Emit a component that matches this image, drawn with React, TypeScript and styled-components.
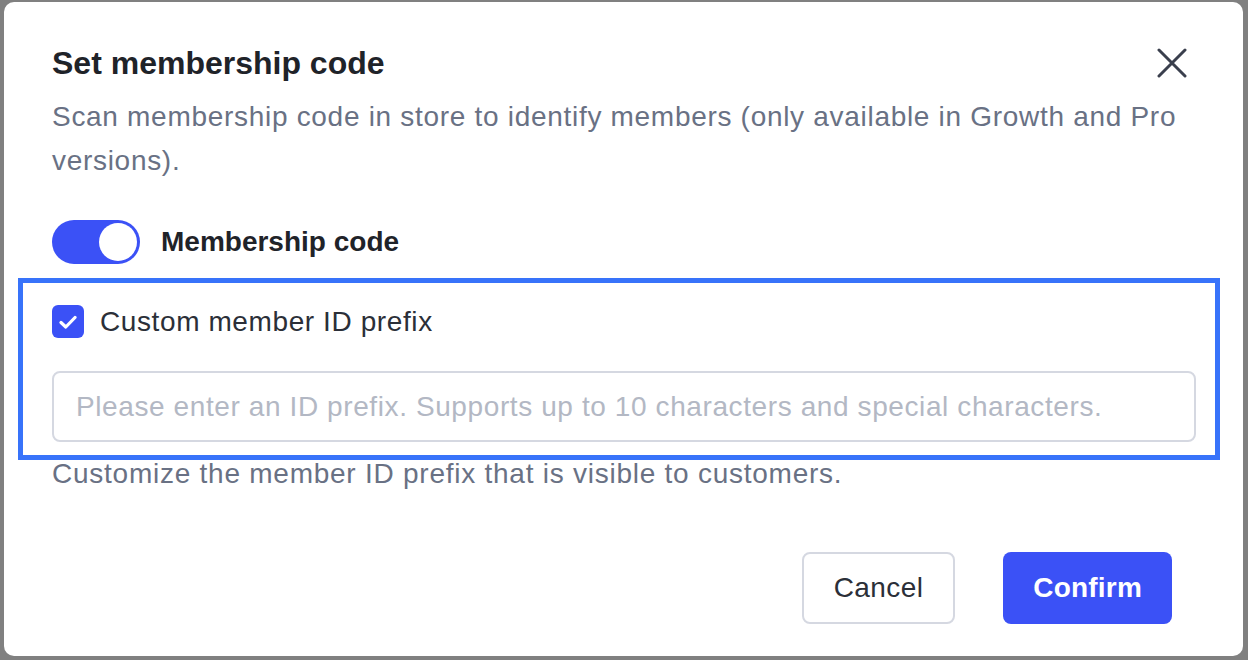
import React, { useState } from "react";
import styled, { createGlobalStyle } from "styled-components";

const Global = createGlobalStyle`
  html, body { margin: 0; padding: 0; background: #808080; }
  body { font-family: "Liberation Sans", Arial, sans-serif; -webkit-font-smoothing: antialiased; }
  * { box-sizing: border-box; }
`;

const Page = styled.div`
  width: 1248px;
  height: 660px;
  padding: 2px 5px 4px 4px;
  background: #808080;
`;

const Modal = styled.div`
  width: 1239px;
  height: 654px;
  background: #ffffff;
  border-radius: 10px;
  padding: 38px 48px 32px 48px;
  display: flex;
  flex-direction: column;
`;

const Header = styled.div`
  display: flex;
  align-items: center;
  justify-content: space-between;
  height: 46px;
`;

const Title = styled.h2`
  margin: 0;
  font-size: 32px;
  line-height: 46px;
  font-weight: 700;
  color: #1f2329;
  letter-spacing: 0;
`;

const CloseButton = styled.button`
  width: 46px;
  height: 46px;
  border: 0;
  background: transparent;
  padding: 0;
  display: flex;
  align-items: center;
  justify-content: center;
  cursor: pointer;
`;

const Description = styled.p`
  margin: 9px 0 0 0;
  font-size: 28px;
  line-height: 44px;
  color: #697184;
  letter-spacing: 0.7px;
`;

const ToggleRow = styled.div`
  display: flex;
  align-items: center;
  gap: 21px;
  margin-top: 37px;
`;

const Track = styled.button<{ $on: boolean }>`
  width: 88px;
  height: 44px;
  border-radius: 22px;
  border: 0;
  padding: 3px;
  background: ${(p) => (p.$on ? "#3b51f6" : "#c9cdd4")};
  display: flex;
  justify-content: ${(p) => (p.$on ? "flex-end" : "flex-start")};
  cursor: pointer;
`;

const Knob = styled.span`
  width: 38px;
  height: 38px;
  border-radius: 50%;
  background: #ffffff;
`;

const ToggleLabel = styled.span`
  font-size: 28px;
  line-height: 44px;
  font-weight: 700;
  color: #1f2329;
`;

const Highlight = styled.div`
  margin: 14px -25px 0 -34px;
  border: 5px solid #3873fa;
  padding: 22px 19px 13px 29px;
  display: flex;
  flex-direction: column;
  gap: 33px;
`;

const CheckRow = styled.label`
  display: flex;
  align-items: center;
  gap: 16px;
  height: 33px;
  cursor: pointer;
`;

const CheckBox = styled.span<{ $checked: boolean }>`
  width: 32px;
  height: 33px;
  border-radius: 6px;
  background: ${(p) => (p.$checked ? "#3b51f6" : "#fff")};
  border: ${(p) => (p.$checked ? "0" : "2px solid #d0d3da")};
  display: flex;
  align-items: center;
  justify-content: center;
`;

const CheckLabel = styled.span`
  font-size: 28px;
  line-height: 40px;
  color: #2b2f38;
  letter-spacing: 0.6px;
`;

const Input = styled.input`
  width: 100%;
  height: 71px;
  border: 2px solid #d5d8e1;
  border-radius: 8px;
  padding: 0 22px;
  font-family: inherit;
  font-size: 28px;
  letter-spacing: 0.6px;
  color: #1f2329;
  outline: none;
  &::placeholder {
    color: #b3b8c4;
  }
`;

const Helper = styled.p`
  margin: -3px 0 0 0;
  font-size: 28px;
  line-height: 34px;
  color: #697184;
  letter-spacing: 0.75px;
`;

const Footer = styled.div`
  margin-top: auto;
  display: flex;
  justify-content: flex-end;
  gap: 48px;
  padding-right: 23px;
`;

const Button = styled.button<{ $primary?: boolean }>`
  height: 72px;
  padding: 0 30px;
  border-radius: 8px;
  font-family: inherit;
  font-size: 28px;
  font-weight: ${(p) => (p.$primary ? 700 : 400)};
  letter-spacing: ${(p) => (p.$primary ? "0.2px" : "0.4px")};
  border: ${(p) => (p.$primary ? "0" : "2px solid #d5d8e1")};
  background: ${(p) => (p.$primary ? "#3b51f6" : "#ffffff")};
  color: ${(p) => (p.$primary ? "#ffffff" : "#2b2f38")};
  cursor: pointer;
`;

export default function App() {
  const [on, setOn] = useState(true);
  const [checked, setChecked] = useState(true);
  return (
    <>
      <Global />
      <Page>
        <Modal>
          <Header>
            <Title>Set membership code</Title>
            <CloseButton aria-label="Close">
              <svg width="30" height="30" viewBox="0 0 30 30">
                <path d="M2 2 L28 28 M28 2 L2 28" stroke="#3a3f4d" strokeWidth="3" strokeLinecap="round" />
              </svg>
            </CloseButton>
          </Header>
          <Description>
            Scan membership code in store to identify members (only available in Growth and Pro versions).
          </Description>
          <ToggleRow>
            <Track $on={on} onClick={() => setOn(!on)}>
              <Knob />
            </Track>
            <ToggleLabel>Membership code</ToggleLabel>
          </ToggleRow>
          <Highlight>
            <CheckRow onClick={() => setChecked(!checked)}>
              <CheckBox $checked={checked}>
                {checked && (
                  <svg width="18" height="14" viewBox="0 0 18 14">
                    <path d="M2 7.5 L6.8 12 L16 2.5" stroke="#ffffff" strokeWidth="3.2" fill="none" strokeLinecap="round" strokeLinejoin="round" />
                  </svg>
                )}
              </CheckBox>
              <CheckLabel>Custom member ID prefix</CheckLabel>
            </CheckRow>
            <Input placeholder="Please enter an ID prefix. Supports up to 10 characters and special characters." />
          </Highlight>
          <Helper>Customize the member ID prefix that is visible to customers.</Helper>
          <Footer>
            <Button>Cancel</Button>
            <Button $primary>Confirm</Button>
          </Footer>
        </Modal>
      </Page>
    </>
  );
}
